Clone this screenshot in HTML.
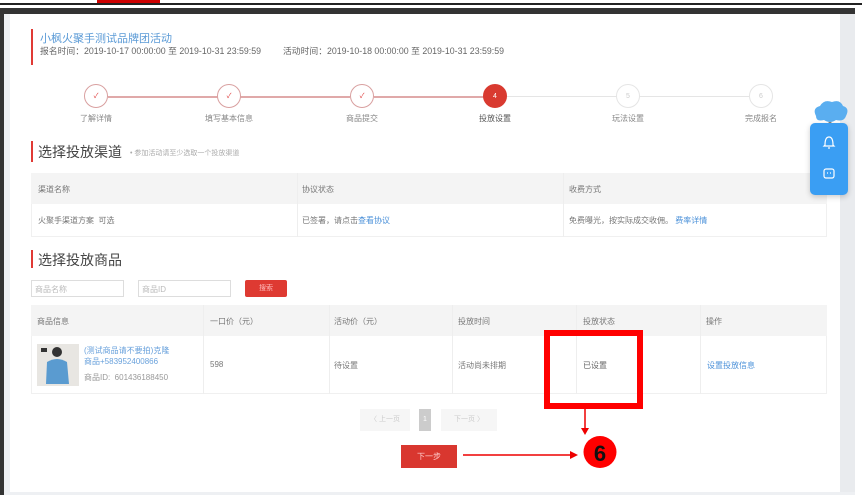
<!DOCTYPE html>
<html><head><meta charset="utf-8">
<style>
*{margin:0;padding:0;box-sizing:border-box}
body{width:868px;height:495px;overflow:hidden;background:#fff;position:relative;font-family:"Liberation Sans","Noto Sans CJK SC",sans-serif;color:#666}
.a{position:absolute}
.t{font-size:8px;color:#777;white-space:nowrap}
.lnk{color:#4a90d9}
.circ{width:24px;height:24px;border-radius:50%;border:1.5px solid #d9a0a0;background:#fff;display:flex;align-items:center;justify-content:center;font-size:7px;color:#ccc}
.lab{font-size:8px;color:#888;width:80px;text-align:center}
.sec{font-size:14px;color:#444}
</style></head><body>
<div class="a" style="left:0;top:3px;width:862px;height:2px;background:#222"></div>
<div class="a" style="left:97px;top:0;width:63px;height:3px;background:#c00"></div>
<div class="a" style="left:0;top:8px;width:855px;height:6px;background:#333"></div>
<div class="a" style="left:0;top:14px;width:4px;height:481px;background:#333"></div>
<div class="a" style="left:4px;top:14px;width:851px;height:481px;background:#eef0f3"></div>
<div class="a" style="left:10px;top:14px;width:830px;height:478px;background:#fff"></div>

<div class="a" style="left:31px;top:29px;width:2px;height:36px;background:#e03a35"></div>
<div class="a" style="left:40px;top:30px;font-size:11px;color:#5a9ad6">小枫火聚手测试品牌团活动</div>
<div class="a t" style="left:40px;top:44px;color:#666;font-size:8.8px">报名时间：2019-10-17 00:00:00 至 2019-10-31 23:59:59</div>
<div class="a t" style="left:283px;top:44px;color:#666;font-size:8.8px">活动时间：2019-10-18 00:00:00 至 2019-10-31 23:59:59</div>

<div class="a" style="left:108px;top:96px;width:242px;height:1.5px;background:#e0a9a9"></div>
<div class="a" style="left:374px;top:96px;width:110px;height:1.5px;background:#e0a9a9"></div>
<div class="a" style="left:507px;top:96px;width:242px;height:1px;background:#e5e5e5"></div>
<div class="a circ" style="left:84px;top:84px;color:#d33">✓</div>
<div class="a circ" style="left:217px;top:84px;color:#d33">✓</div>
<div class="a circ" style="left:350px;top:84px;color:#d33">✓</div>
<div class="a circ" style="left:483px;top:84px;background:#d93a30;border-color:#d93a30;color:#fff">4</div>
<div class="a circ" style="left:616px;top:84px;border-color:#e5e5e5">5</div>
<div class="a circ" style="left:749px;top:84px;border-color:#e5e5e5">6</div>
<div class="a lab" style="left:56px;top:113px">了解详情</div>
<div class="a lab" style="left:189px;top:113px">填写基本信息</div>
<div class="a lab" style="left:322px;top:113px">商品提交</div>
<div class="a lab" style="left:455px;top:113px;color:#555">投放设置</div>
<div class="a lab" style="left:588px;top:113px">玩法设置</div>
<div class="a lab" style="left:721px;top:113px">完成报名</div>

<div class="a" style="left:31px;top:141px;width:2px;height:21px;background:#e03a35"></div>
<div class="a sec" style="left:38px;top:142px">选择投放渠道</div>
<div class="a t" style="left:130px;top:148px;font-size:7px;color:#aaa">• 参加活动请至少选取一个投放渠道</div>

<div class="a" style="left:31px;top:173px;width:796px;height:64px;border:1px solid #f0f0f0"></div>
<div class="a" style="left:31px;top:173px;width:796px;height:31px;background:#f4f4f4"></div>
<div class="a" style="left:297px;top:173px;width:1px;height:64px;background:#eee"></div>
<div class="a" style="left:563px;top:173px;width:1px;height:64px;background:#eee"></div>
<div class="a t" style="left:38px;top:184px">渠道名称</div>
<div class="a t" style="left:302px;top:184px">协议状态</div>
<div class="a t" style="left:569px;top:184px">收费方式</div>
<div class="a t" style="left:38px;top:215px">火聚手渠道方案 &nbsp;可选</div>
<div class="a t" style="left:302px;top:215px">已签署，请点击<span class="lnk">查看协议</span></div>
<div class="a t" style="left:569px;top:215px">免费曝光，按实际成交收佣。 <span class="lnk">费率详情</span></div>

<div class="a" style="left:31px;top:250px;width:2px;height:18px;background:#e03a35"></div>
<div class="a sec" style="left:38px;top:250px">选择投放商品</div>

<div class="a" style="left:31px;top:280px;width:93px;height:17px;border:1px solid #ddd"></div>
<div class="a t" style="left:35px;top:284px;color:#bbb">商品名称</div>
<div class="a" style="left:138px;top:280px;width:93px;height:17px;border:1px solid #ddd"></div>
<div class="a t" style="left:142px;top:284px;color:#bbb">商品ID</div>
<div class="a" style="left:245px;top:280px;width:42px;height:17px;background:#de3a32;border-radius:2px;color:#fbb;font-size:7px;text-align:center;line-height:17px">搜索</div>

<div class="a" style="left:31px;top:305px;width:796px;height:89px;border:1px solid #f0f0f0"></div>
<div class="a" style="left:31px;top:305px;width:796px;height:31px;background:#f4f4f4"></div>
<div class="a" style="left:203px;top:305px;width:1px;height:89px;background:#eee"></div>
<div class="a" style="left:329px;top:305px;width:1px;height:89px;background:#eee"></div>
<div class="a" style="left:452px;top:305px;width:1px;height:89px;background:#eee"></div>
<div class="a" style="left:576px;top:305px;width:1px;height:89px;background:#eee"></div>
<div class="a" style="left:700px;top:305px;width:1px;height:89px;background:#eee"></div>
<div class="a t" style="left:37px;top:316px">商品信息</div>
<div class="a t" style="left:210px;top:316px">一口价（元）</div>
<div class="a t" style="left:334px;top:316px">活动价（元）</div>
<div class="a t" style="left:458px;top:316px">投放时间</div>
<div class="a t" style="left:583px;top:316px">投放状态</div>
<div class="a t" style="left:706px;top:316px">操作</div>
<svg class="a" style="left:37px;top:344px" width="42" height="42"><rect width="42" height="42" fill="#e8e6e2"/><circle cx="20" cy="8" r="5" fill="#333"/><path d="M10 18 Q20 12 30 18 L32 40 L9 40Z" fill="#5a9bd0"/><rect x="4" y="4" width="6" height="4" fill="#333"/></svg>
<div class="a" style="left:84px;top:345px;font-size:8px;line-height:11px;color:#6aa2dc">(测试商品请不要拍)克隆<br>商品+583952400866</div>
<div class="a t" style="left:84px;top:372px;color:#999">商品ID: &nbsp;601436188450</div>
<div class="a t" style="left:210px;top:360px">598</div>
<div class="a t" style="left:334px;top:360px">待设置</div>
<div class="a t" style="left:458px;top:360px">活动尚未排期</div>
<div class="a t" style="left:583px;top:360px;color:#666">已设置</div>
<div class="a t lnk" style="left:707px;top:360px">设置投放信息</div>

<div class="a" style="left:360px;top:409px;width:50px;height:22px;background:#f6f6f6;font-size:7px;color:#ccc;text-align:center;line-height:22px">〈 上一页</div>
<div class="a" style="left:419px;top:409px;width:12px;height:22px;background:#ccc;font-size:7px;color:#fff;text-align:center;line-height:22px">1</div>
<div class="a" style="left:441px;top:409px;width:56px;height:22px;background:#f6f6f6;font-size:7px;color:#ccc;text-align:center;line-height:22px">下一页 〉</div>
<div class="a" style="left:401px;top:445px;width:56px;height:23px;background:#d9372f;font-size:8px;color:#fcc;text-align:center;line-height:23px">下一步</div>

<svg class="a" style="left:0;top:0" width="868" height="495">
<rect x="547" y="333" width="93" height="73" fill="none" stroke="#f00" stroke-width="6"/>
<line x1="585" y1="409" x2="585" y2="430" stroke="#e00" stroke-width="1.5"/>
<path d="M581 428 L585 435 L589 428Z" fill="#e00"/>
<line x1="463" y1="455" x2="572" y2="455" stroke="#e00" stroke-width="1.5"/>
<path d="M570 451 L578 455 L570 459Z" fill="#e00"/>
<ellipse cx="600" cy="452" rx="16.5" ry="16" fill="#f00"/>
<text x="600" y="461" font-family="Liberation Sans" font-weight="bold" font-size="22" text-anchor="middle" fill="#111">6</text>
</svg>

<div class="a" style="left:840px;top:14px;width:15px;height:478px;background:#e9ebee"></div>
<svg class="a" style="left:810px;top:98px" width="40" height="30"><path d="M6 18 Q2 10 10 8 Q14 1 22 4 Q30 1 33 8 Q40 10 36 18 Q34 24 26 22 Q20 26 14 22 Q6 24 6 18Z" fill="#5aaef0"/><circle cx="20" cy="26" r="2" fill="#777"/></svg>
<div class="a" style="left:810px;top:123px;width:38px;height:72px;background:#3a9ef3;border-radius:5px;box-shadow:0 2px 6px rgba(0,0,0,.2)"></div>
<svg class="a" style="left:820px;top:133px" width="18" height="55" fill="none" stroke="#fff" stroke-width="1.2"><path d="M5 12 Q5 4 9 4 Q13 4 13 12 L14 13 L4 13Z"/><path d="M8 15 L10 15"/><rect x="4" y="36" width="10" height="9" rx="2"/><path d="M7 40 h1 M10 40 h1"/></svg>
</body></html>
